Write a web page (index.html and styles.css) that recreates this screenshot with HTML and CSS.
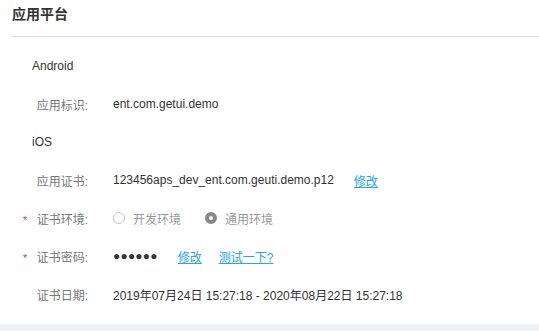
FILE: index.html
```html
<!DOCTYPE html>
<html>
<head>
<meta charset="utf-8">
<link rel="stylesheet" href="styles.css">
</head>
<body>
<div class="panel">
  <h2 class="title">应用平台</h2>
  <div class="form">
    <div class="row"><span class="section">Android</span></div>
    <div class="row"><span class="label">应用标识:</span><span class="value">ent.com.getui.demo</span></div>
    <div class="row"><span class="section">iOS</span></div>
    <div class="row"><span class="label">应用证书:</span><span class="value">123456aps_dev_ent.com.geuti.demo.p12</span><a class="link link-cert">修改</a></div>
    <div class="row"><span class="label req">证书环境:</span>
      <span class="value radios">
        <span class="radio"><span class="dot"></span>开发环境</span>
        <span class="radio"><span class="dot on"></span>通用环境</span>
      </span>
    </div>
    <div class="row"><span class="label req">证书密码:</span><span class="value pw">●●●●●●</span><a class="link link-pw">修改</a><a class="link">测试一下?</a></div>
    <div class="row"><span class="label">证书日期:</span><span class="value">2019年07月24日 15:27:18 - 2020年08月22日 15:27:18</span></div>
  </div>
</div>
<div class="footer"></div>
</body>
</html>
```
FILE: styles.css
```css
html, body { margin: 0; padding: 0; background: #fff; }
body {
  font-family: "Liberation Sans", "Noto Sans CJK SC", sans-serif;
  font-size: 12px;
  color: #333;
}
.panel { padding-left: 12px; }
.title {
  margin: 0;
  height: 36px;
  line-height: 28px;
  font-size: 14px;
  font-weight: bold;
  color: #333;
  border-bottom: 1px solid #dcdcdc;
}
.form { padding-top: 10px; padding-bottom: 11px; }
.row {
  display: flex;
  align-items: center;
  height: 38px;
}
.section { padding-left: 20px; color: #333; }
.label {
  width: 76px;
  text-align: right;
  color: #777;
  position: relative;
  flex: none;
}
.label.req::before {
  content: "*";
  color: #e5383b;
  position: absolute;
  left: 11px;
  top: 4px;
  font-size: 11px;
}
.value { margin-left: 25px; color: #333; }
.pw { font-size: 12px; letter-spacing: 0.2px; }
.link {
  color: #2aa4e6;
  text-decoration: underline;
  cursor: pointer;
}
.link-cert { margin-left: 20px; }
.link-pw { margin-left: 20px; margin-right: 17px; }
.radios { display: flex; align-items: center; color: #999; }
.radio { display: inline-flex; align-items: center; margin-right: 24px; }
.dot {
  width: 10px;
  height: 10px;
  border: 1px solid #c8c8c8;
  border-radius: 50%;
  margin-right: 8px;
  box-sizing: content-box;
}
.dot.on {
  width: 4px;
  height: 4px;
  border: 4px solid #888;
  background: #fff;
}
.footer { height: 7px; background: #eef2f6; }
```
